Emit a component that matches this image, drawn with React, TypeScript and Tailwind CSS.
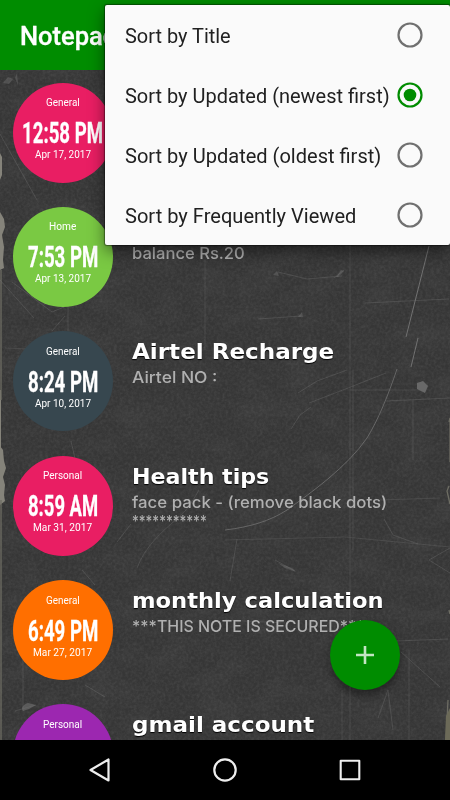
import { useLayoutEffect, useRef, useState } from "react";

type Note = {
  category: string;
  categoryWidth: number;
  time: string;
  timeWidth: number;
  date: string;
  dateWidth: number;
  color: string;
  title?: string;
  titleWidth?: number;
  lines: Array<{ text: string; width: number }>;
};

const notes: Note[] = [
  { category: "General", categoryWidth: 34, time: "12:58 PM", timeWidth: 81, date: "Apr 17, 2017", dateWidth: 56, color: "bg-[#e91e63]", lines: [] },
  {
    category: "Home", categoryWidth: 27, time: "7:53 PM", timeWidth: 70, date: "Apr 13, 2017", dateWidth: 56, color: "bg-[#7ac943]",
    lines: [{ text: "balance Rs.20", width: 113 }],
  },
  {
    category: "General", categoryWidth: 34, time: "8:24 PM", timeWidth: 70, date: "Apr 10, 2017", dateWidth: 56, color: "bg-[#37474f]",
    title: "Airtel Recharge", titleWidth: 202, lines: [{ text: "Airtel NO :", width: 85 }],
  },
  {
    category: "Personal", categoryWidth: 39, time: "8:59 AM", timeWidth: 70, date: "Mar 31, 2017", dateWidth: 59, color: "bg-[#e91e63]",
    title: "Health tips", titleWidth: 137, lines: [{ text: "face pack - (remove black dots)", width: 255 }, { text: "***********", width: 75 }],
  },
  {
    category: "General", categoryWidth: 34, time: "6:49 PM", timeWidth: 70, date: "Mar 27, 2017", dateWidth: 59, color: "bg-[#ff6f00]",
    title: "monthly calculation", titleWidth: 252, lines: [{ text: "***THIS NOTE IS SECURED***", width: 233 }],
  },
  {
    category: "Personal", categoryWidth: 39, time: "", timeWidth: 0, date: "", dateWidth: 0, color: "bg-[#9c27b0]",
    title: "gmail account", titleWidth: 182, lines: [],
  },
];

const sortOptions = [
  { label: "Sort by Title", width: 106 },
  { label: "Sort by Updated (newest first)", width: 265 },
  { label: "Sort by Updated (oldest first)", width: 256 },
  { label: "Sort by Frequently Viewed", width: 231 },
];

// Stretches a single line of text to the given width
function FitText({ text, width, className = "" }: { text: string; width: number; className?: string }) {
  const ref = useRef<HTMLSpanElement>(null);
  const [scale, setScale] = useState(1);

  useLayoutEffect(() => {
    if (ref.current && ref.current.offsetWidth) setScale(width / ref.current.offsetWidth);
  }, [text, width]);

  return (
    <span className={`block shrink-0 whitespace-nowrap ${className}`} style={{ width }}>
      <span ref={ref} className="inline-block origin-left" style={{ transform: `scaleX(${scale})` }}>
        {text}
      </span>
    </span>
  );
}

function Chalkboard() {
  return (
    <svg className="absolute inset-0" width="450" height="670" viewBox="0 70 450 670" fill="none">
      <defs>
        <filter id="grain" x="0" y="0" width="100%" height="100%">
          <feTurbulence type="fractalNoise" baseFrequency="0.35" numOctaves="3" seed="4" />
          <feColorMatrix values="0 0 0 0 1  0 0 0 0 1  0 0 0 0 1  0.5 0.3 0 0 -0.3" />
        </filter>
        <filter id="smudge" x="0" y="0" width="100%" height="100%">
          <feTurbulence type="fractalNoise" baseFrequency="0.025 0.04" numOctaves="4" seed="9" />
          <feColorMatrix values="0 0 0 0 1  0 0 0 0 1  0 0 0 0 1  0.5 0 0 0 -0.2" />
        </filter>
        <filter id="soft" x="-20%" y="-20%" width="140%" height="140%">
          <feGaussianBlur stdDeviation="0.6" />
        </filter>
      </defs>
      <rect y="70" width="450" height="670" fill="#363636" />
      <rect y="70" width="450" height="670" filter="url(#grain)" opacity="0.2" />
      <rect y="70" width="450" height="670" filter="url(#smudge)" opacity="0.14" />
      <g filter="url(#soft)">
        <path d="M0 153l2 4v18l-2 5zM0 212l4 7 1 8-3 8 2 12-1 13 1 8-4 2zM0 390h1v58H0zM0 446l3 4 1 11 2 7-3 9 2 8-1 10 1 6-5 4z" fill="#85837a" />
        <path d="M1 500v240M1 270v130M449 422l1-4v44M449 486l-2 5 3 13M449 610l1 4M448 700l-2 40" stroke="#6d6c63" strokeWidth="1.3" />
        <path d="M450 708l-4 8-1 24h5z" fill="#6c6b58" />
        <path d="M417 383l6-2 5 5-3 7-8-4z" fill="#686868" />
        <g stroke="#777" strokeWidth="0.9">
          <path d="M429 246L406 337M418 338l-7 29" />
          <path d="M397 369C388 396 378 420 367 438C347 467 312 492 287 510C270 521 250 527 225 530" opacity="0.8" />
        </g>
        <g stroke="#777" strokeWidth="0.8" opacity="0.42">
          <path d="M291 429l9-14 11-8M298 393l19-12 30-11M309 403l39-15 38-15" />
          <path d="M0 134l37 66M0 280l34 38M12 282l40 30 12-5M52 331l13-15M68 306v25" />
          <path d="M117 542l14-18M137 568c8-21 24-36 40-49 10-8 18-22 22-29M71 441l5 22M82 570l13 15" />
          <path d="M278 272l29 7 35-3M334 278l10-8M258 319l43-3M365 303l84-4M386 401l64-3" />
          <path d="M237 539l-7 42M275 560l20 11M384 519l9 16 25 9M429 560l21 13M429 560l21-12" />
          <path d="M401 652l39 35M396 641l52-2M378 718l10-28 5 40" />
          <path d="M23 655v56M15 711l21-6M37 671l28-20M85 685l20 12" />
        </g>
        <g stroke="#656565" strokeWidth="0.7" opacity="0.55">
          <path d="M350 245v495M353 370v180M413 400v60M205 260v90M342 690v50M409 650v90" />
          <path d="M225 540l120-3 105 10M232 350l-20 8M350 390h75M225 620l60 3M5 348l45 2M380 500l60-2" />
        </g>
        <path d="M23 711c-3-3 1-7 5-8l8 2-7 4z" fill="#727272" opacity="0.6" />
        <path d="M3 83l5-6 5 2-4 5zM15 78l2-5 1 12zM273 275l4-4 2 5zM336 277l5-7 3 1-6 6zM298 317l4-5 1 5zM278 563l14 5 4 4-11-4z" fill="#777" opacity="0.4" />
      </g>
    </svg>
  );
}

function NoteRow({ note }: { note: Note }) {
  return (
    <article className="flex h-[100px] shrink-0 gap-[19px]">
      <div className={`flex h-[100px] w-[100px] shrink-0 flex-col items-center pt-[13.5px] text-white ${note.color} rounded-full`}>
        <FitText text={note.category} width={note.categoryWidth} className="text-[10.5px] leading-[13px]" />
        {note.time && (
          <>
            <FitText
              text={note.time}
              width={note.timeWidth}
              className="mt-[10px] text-[29px] leading-[28px] font-bold [-webkit-text-stroke:0.3px_white]"
            />
            <FitText text={note.date} width={note.dateWidth} className="mt-[1px] text-[10.5px] leading-[13px]" />
          </>
        )}
      </div>
      <div className="flex flex-col pt-[8px]">
        <div className="h-[29px]">
          {note.title && (
            <FitText
              text={note.title}
              width={note.titleWidth ?? 0}
              className="font-['DejaVu_Sans',sans-serif] text-[21px] leading-[26px] font-bold text-white [text-shadow:0_1px_1px_black]"
            />
          )}
        </div>
        {note.lines.map((line) => (
          <FitText
            key={line.text}
            text={line.text}
            width={line.width}
            className="font-[Inter,sans-serif] text-[16px] leading-[19px] font-medium text-[#b0b0b0]"
          />
        ))}
      </div>
    </article>
  );
}

function RadioIcon({ checked }: { checked: boolean }) {
  return (
    <svg width="26" height="26" viewBox="0 0 26 26" fill="none" className={checked ? "text-[#008c00]" : "text-[#707070]"}>
      <circle cx="13" cy="13" r="11.5" stroke="currentColor" strokeWidth="2.2" />
      {checked && <circle cx="13" cy="13" r="6.3" fill="currentColor" />}
    </svg>
  );
}

function SortMenu() {
  const [selected, setSelected] = useState(1);

  return (
    <div className="absolute top-[5px] right-0 w-[345px] rounded-[2px] bg-[#fafafa] shadow-[0_0_1px_1px_rgba(0,0,0,0.4),0_6px_16px_rgba(0,0,0,0.5)]">
      {sortOptions.map((option, index) => (
        <button
          key={option.label}
          type="button"
          onClick={() => setSelected(index)}
          className="flex h-[60px] w-full items-center justify-between pr-[27px] pl-[19.5px] text-left text-[20.5px] text-[#212121]"
        >
          <FitText text={option.label} width={option.width} className="pt-[2px]" />
          <RadioIcon checked={selected === index} />
        </button>
      ))}
    </div>
  );
}

export default function App() {
  return (
    <div className="relative flex h-[800px] w-[450px] flex-col overflow-hidden bg-black font-[Roboto,sans-serif]">
      <header className="flex h-[70px] shrink-0 items-center bg-[#008c00] pt-[4px] pl-5">
        <FitText text="Notepad" width={97} className="text-[25px] font-medium text-white [-webkit-text-stroke:0.3px_white]" />
      </header>
      <main className="relative h-[670px] overflow-hidden">
        <Chalkboard />
        <div className="relative flex flex-col gap-[24.4px] pt-[12.5px] pl-[12.5px]">
          {notes.map((note, index) => (
            <NoteRow key={index} note={note} />
          ))}
        </div>
        <button
          type="button"
          aria-label="Add note"
          className="absolute right-[50px] bottom-[50px] flex h-[70px] w-[70px] items-center justify-center rounded-full bg-[#008c00] shadow-[0_5px_8px_rgba(0,0,0,0.4)]"
        >
          <svg width="18" height="18" viewBox="0 0 18 18" stroke="#c3e5c3" strokeWidth="2.6">
            <path d="M9 0v18M0 9h18" />
          </svg>
        </button>
      </main>
      <nav className="flex h-[60px] shrink-0 items-center justify-center gap-[101px] bg-black">
        <svg width="24" height="26" viewBox="0 0 24 26" fill="none" stroke="#eee" strokeWidth="2.2" strokeLinejoin="round">
          <path d="M20.5 2.5v21L2.5 13z" />
        </svg>
        <svg width="24" height="24" viewBox="0 0 24 24" fill="none" stroke="#eee" strokeWidth="2.2">
          <circle cx="12" cy="12" r="10.7" />
        </svg>
        <svg width="24" height="24" viewBox="0 0 24 24" fill="none" stroke="#eee" strokeWidth="2.1" strokeLinejoin="round">
          <path d="M2.7 2.7h18.6v18.6H2.7z" />
        </svg>
      </nav>
      <SortMenu />
    </div>
  );
}
